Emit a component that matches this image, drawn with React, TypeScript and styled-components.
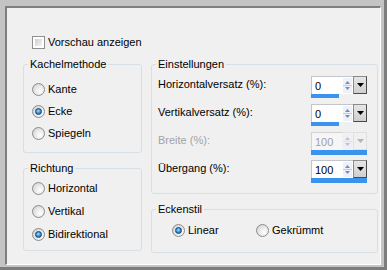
import React from 'react';
import styled, { createGlobalStyle } from 'styled-components';

const GlobalStyle = createGlobalStyle`
	html, body {
		margin: 0;
		padding: 0;
		background: #f0f0f0;
	}
	body {
		font-family: 'Liberation Sans', Arial, sans-serif;
		font-size: 11px;
		color: #000;
	}
`;

const Frame = styled.div`
	box-sizing: border-box;
	width: 387px;
	height: 270px;
	display: flex;
	background: #c4c4c4;
	padding: 6px 3px 2px 5px;
	border-right: 3px solid #7d7d7d;
	border-bottom: 3px solid #7d7d7d;
`;

const Panel = styled.div`
	flex: 1;
	display: flex;
	flex-direction: column;
	background: #f0f0f0;
	border-top: 2px solid #7f7f7f;
	border-left: 2px solid #7f7f7f;
	border-right: 1px solid #fff;
	border-bottom: 1px solid #fff;
	padding: 28px 0 0 16px;
`;

const CheckRow = styled.label`
	display: flex;
	align-items: center;
	gap: 3px;
	height: 13px;
	margin-left: 9px;
	line-height: 13px;
`;

const CheckBox = styled.span`
	box-sizing: border-box;
	width: 13px;
	height: 13px;
	border: 1px solid #8e8f8f;
	background: #fff;
	padding: 2px;
	&::before {
		content: '';
		display: block;
		width: 7px;
		height: 7px;
		background: linear-gradient(135deg, #cfcfcf, #f4f4f4);
	}
`;

const Columns = styled.div`
	display: flex;
	gap: 9px;
	margin-top: 9px;
`;

const Column = styled.div<{ $width: number }>`
	display: flex;
	flex-direction: column;
	gap: 9px;
	width: ${(p) => p.$width}px;
`;

const Group = styled.fieldset<{ $height: number }>`
	box-sizing: border-box;
	margin: 0;
	padding: 0;
	min-width: 0;
	height: ${(p) => p.$height}px;
	border: 1px solid #d5dfe5;
	border-radius: 3px;
`;

const Legend = styled.legend`
	margin-left: 4px;
	padding: 0 2px;
	line-height: 12px;
	height: 12px;
`;

const GroupBody = styled.div<{ $top: number; $left: number }>`
	display: flex;
	flex-direction: column;
	padding: ${(p) => p.$top}px 10px 0 ${(p) => p.$left}px;
`;

const RadioRow = styled.label<{ $height: number }>`
	display: flex;
	align-items: center;
	gap: 3px;
	height: ${(p) => p.$height}px;
	line-height: 13px;
`;

const RadioDot = styled.span<{ $checked?: boolean }>`
	box-sizing: border-box;
	position: relative;
	width: 13px;
	height: 13px;
	border-radius: 50%;
	border: 1px solid #8c8c8c;
	background: radial-gradient(circle at 65% 65%, #ffffff 0%, #eaeaea 45%, #c9c9c9 100%);
	&::after {
		content: '';
		display: ${(p) => (p.$checked ? 'block' : 'none')};
		position: absolute;
		left: 2px;
		top: 2px;
		width: 7px;
		height: 7px;
		box-sizing: border-box;
		border-radius: 50%;
		border: 1px solid #1d3f66;
		background: radial-gradient(circle at 45% 40%, #a8e2ff 0%, #3b9be6 45%, #0d4f9a 100%);
	}
`;

const InlineRadios = styled.div`
	display: grid;
	grid-template-columns: 84px auto;
`;

const FieldRow = styled.div`
	display: flex;
	justify-content: space-between;
	align-items: flex-start;
	height: 28px;
`;

const FieldLabel = styled.span<{ $disabled?: boolean }>`
	line-height: 17px;
	color: ${(p) => (p.$disabled ? '#a3a3a3' : '#000')};
`;

const Spinner = styled.div`
	display: flex;
	flex-direction: column;
	width: 56px;
`;

const SpinTop = styled.div`
	display: flex;
	height: 18px;
`;

const SpinInput = styled.span<{ $disabled?: boolean }>`
	box-sizing: border-box;
	width: 31px;
	height: 18px;
	padding: 1px 0 0 3px;
	line-height: 16px;
	border: 1px solid ${(p) => (p.$disabled ? '#d3d3d3' : '#c2c6cc')};
	border-right: none;
	border-bottom: none;
	background: ${(p) => (p.$disabled ? '#f6f6f6' : '#fff')};
	color: ${(p) => (p.$disabled ? '#a0a0a0' : '#000')};
`;

const SpinArrows = styled.span<{ $disabled?: boolean }>`
	box-sizing: border-box;
	width: 11px;
	height: 18px;
	border-top: 1px solid ${(p) => (p.$disabled ? '#d3d3d3' : '#c2c6cc')};
	background: ${(p) => (p.$disabled ? '#f6f6f6' : '#fff')};
	opacity: ${(p) => (p.$disabled ? 0.45 : 1)};
`;

const DropButton = styled.span<{ $disabled?: boolean }>`
	box-sizing: border-box;
	display: flex;
	align-items: center;
	justify-content: center;
	width: 14px;
	height: 18px;
	border: 1px solid ${(p) => (p.$disabled ? '#e0e0e0' : '#4a4a4a')};
	border-top-color: ${(p) => (p.$disabled ? '#e0e0e0' : '#8a8a8a')};
	border-left-color: ${(p) => (p.$disabled ? '#e0e0e0' : '#8a8a8a')};
	background: ${(p) => (p.$disabled ? '#f0f0f0' : 'linear-gradient(#e6e6e6, #cfcfcf)')};
`;

const ValueBar = styled.span<{ $thick: number }>`
	display: block;
	height: ${(p) => p.$thick}px;
	background: #3a94ef;
`;

function Radio({ label, checked, height = 22 }: { label: string; checked?: boolean; height?: number }) {
	return (
		<RadioRow $height={height}>
			<RadioDot $checked={checked} />
			<span>{label}</span>
		</RadioRow>
	);
}

function SpinArrowIcon() {
	return (
		<svg width='11' height='17' viewBox='0 0 11 17'>
			<rect x='1' y='1' width='9' height='7' fill='#eef1f7' />
			<rect x='1' y='9' width='9' height='7' fill='#eef1f7' />
			<line x1='1' y1='8.5' x2='10' y2='8.5' stroke='#c9ccd3' />
			<polygon points='3,7 8,7 5.5,4' fill='#7a8bb8' />
			<polygon points='3,10 8,10 5.5,13' fill='#7a8bb8' />
		</svg>
	);
}

interface FieldProps {
	label: string;
	value: string;
	fill: number;
	disabled?: boolean;
}

function Field({ label, value, fill, disabled }: FieldProps) {
	return (
		<FieldRow>
			<FieldLabel $disabled={disabled}>{label}</FieldLabel>
			<Spinner>
				<SpinTop>
					<SpinInput $disabled={disabled}>{value}</SpinInput>
					<SpinArrows $disabled={disabled}>
						<SpinArrowIcon />
					</SpinArrows>
					<DropButton $disabled={disabled}>
						<svg width='7' height='4' viewBox='0 0 7 4'>
							<polygon points='0,0 7,0 3.5,4' fill={disabled ? '#b4b4b4' : '#000'} />
						</svg>
					</DropButton>
				</SpinTop>
				<ValueBar $thick={fill >= 100 ? 5 : 4} style={{ width: `${fill}%` }} />
			</Spinner>
		</FieldRow>
	);
}

export default function App() {
	return (
		<>
			<GlobalStyle />
			<Frame>
				<Panel>
					<CheckRow>
						<CheckBox />
						<span>Vorschau anzeigen</span>
					</CheckRow>
					<Columns>
						<Column $width={119}>
							<Group $height={95}>
								<Legend>Kachelmethode</Legend>
								<GroupBody $top={8} $left={8}>
									<Radio label='Kante' />
									<Radio label='Ecke' checked />
									<Radio label='Spiegeln' />
								</GroupBody>
							</Group>
							<Group $height={89}>
								<Legend>Richtung</Legend>
								<GroupBody $top={3} $left={8}>
									<Radio label='Horizontal' height={23} />
									<Radio label='Vertikal' height={23} />
									<Radio label='Bidirektional' checked height={23} />
								</GroupBody>
							</Group>
						</Column>
						<Column $width={227}>
							<Group $height={136}>
								<Legend>Einstellungen</Legend>
								<GroupBody $top={6} $left={6}>
									<Field label='Horizontalversatz (%):' value='0' fill={50} />
									<Field label='Vertikalversatz (%):' value='0' fill={50} />
									<Field label='Breite (%):' value='100' fill={100} disabled />
									<Field label='Übergang (%):' value='100' fill={100} />
								</GroupBody>
							</Group>
							<Group $height={50}>
								<Legend>Eckenstil</Legend>
								<GroupBody $top={4} $left={20}>
									<InlineRadios>
										<Radio label='Linear' checked />
										<Radio label='Gekrümmt' />
									</InlineRadios>
								</GroupBody>
							</Group>
						</Column>
					</Columns>
				</Panel>
			</Frame>
		</>
	);
}
